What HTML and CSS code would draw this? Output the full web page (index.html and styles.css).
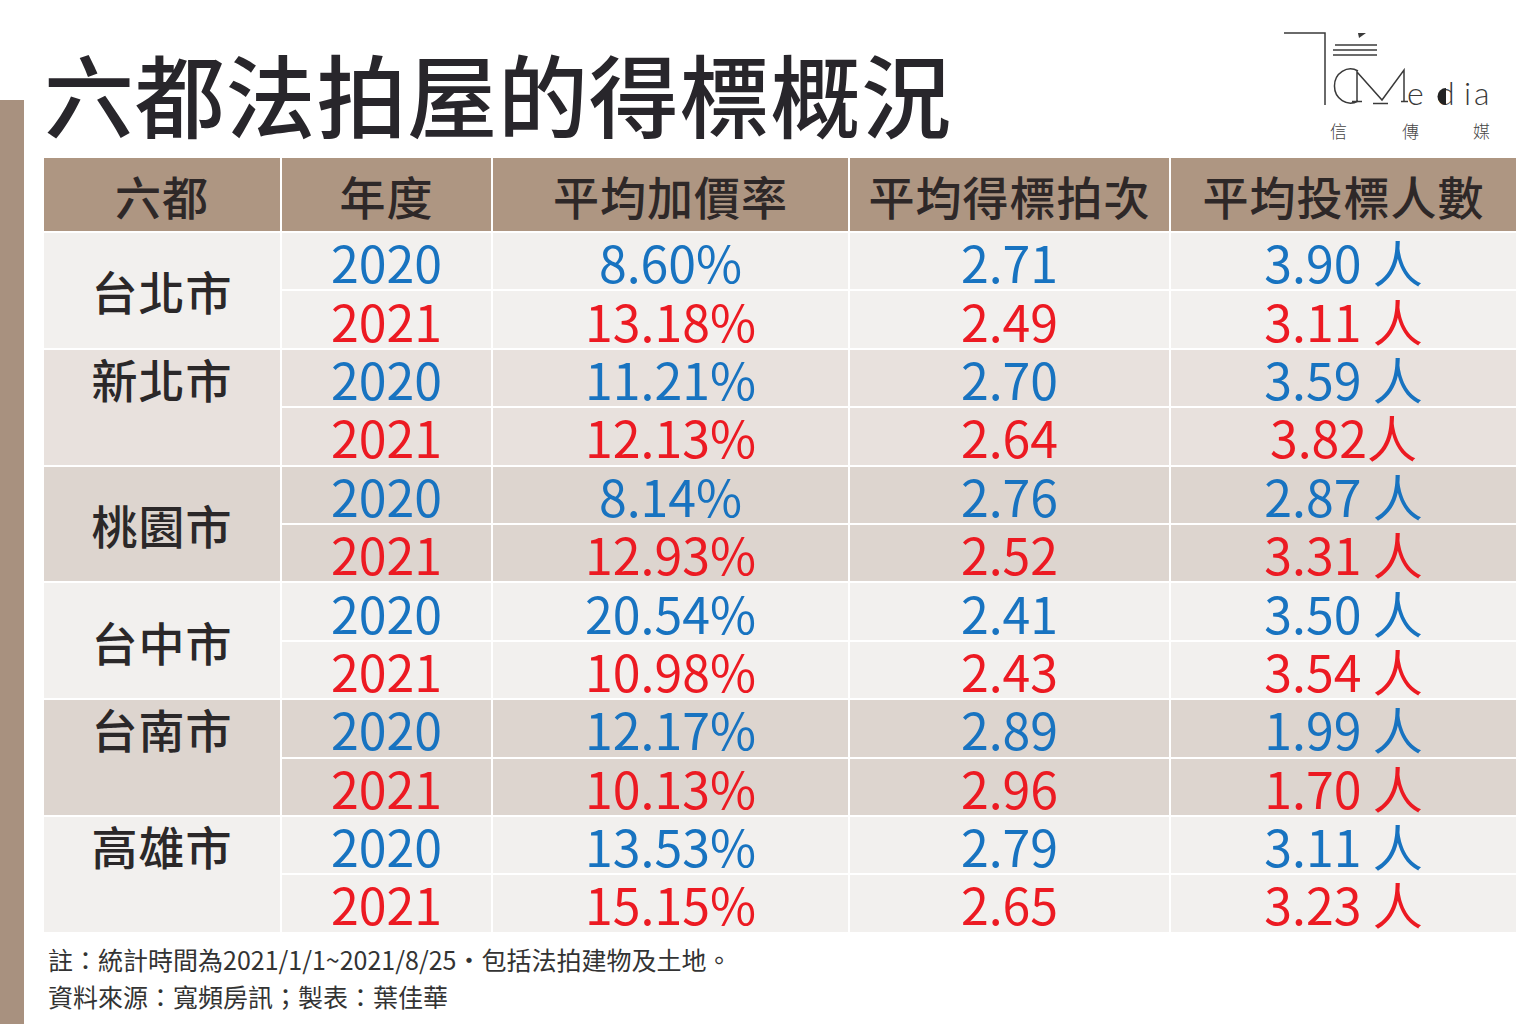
FILE: index.html
```html
<!DOCTYPE html>
<html lang="zh-Hant">
<head>
<meta charset="utf-8">
<title>六都法拍屋的得標概況</title>
<link rel="stylesheet" href="styles.css">
</head>
<body>
<div class="page">
  <div class="sidebar"></div>
  <main class="main">
    <header class="top">
      <h1 class="title">六都法拍屋的得標概況</h1>
      <svg class="logo" width="215" height="120" viewBox="0 0 215 120">
        <g fill="none" stroke="#3a3a3a" stroke-width="1.5">
          <polyline points="4,8 45,8 45,80"/>
          <line x1="55" y1="20" x2="97" y2="20"/>
          <line x1="53" y1="25" x2="97" y2="25"/>
          <line x1="53" y1="30" x2="97" y2="30"/>
          <path d="M78 46 A16 17 0 1 0 78 76"/>
          <path d="M77 76 V47 L102 75 L124 45 V76"/>
          <line x1="72" y1="76.5" x2="82" y2="76.5"/>
          <line x1="93" y1="78.5" x2="108" y2="78.5"/>
          <line x1="121" y1="76.5" x2="128" y2="76.5"/>
        </g>
        <polygon points="78,8 86,8 79,13" fill="#3a3a3a"/>
        <g class="logo-latin" fill="#3a3a3a">
          <text x="127" y="80">e</text>
          <text x="157" y="80">d</text>
          <text x="184" y="80">i</text>
          <text x="194" y="80">a</text>
        </g>
        <path d="M166 63 A8.5 8.5 0 0 0 166 80 Z" fill="#222"/>
        <g class="logo-cjk" fill="#444">
          <text x="50" y="113">信</text>
          <text x="122" y="113">傳</text>
          <text x="193" y="113">媒</text>
        </g>
      </svg>
    </header>

    <div class="table">
      <div class="th">六都</div>
      <div class="th">年度</div>
      <div class="th">平均加價率</div>
      <div class="th">平均得標拍次</div>
      <div class="th">平均投標人數</div>

      <div class="city g-light">台北市</div>
      <div class="cell g-light blue">2020</div>
      <div class="cell g-light blue">8.60%</div>
      <div class="cell g-light blue">2.71</div>
      <div class="cell g-light blue">3.90 人</div>
      <div class="cell g-light red">2021</div>
      <div class="cell g-light red">13.18%</div>
      <div class="cell g-light red">2.49</div>
      <div class="cell g-light red">3.11 人</div>

      <div class="city city-top g-mid">新北市</div>
      <div class="cell g-mid blue">2020</div>
      <div class="cell g-mid blue">11.21%</div>
      <div class="cell g-mid blue">2.70</div>
      <div class="cell g-mid blue">3.59 人</div>
      <div class="cell g-mid red">2021</div>
      <div class="cell g-mid red">12.13%</div>
      <div class="cell g-mid red">2.64</div>
      <div class="cell g-mid red">3.82人</div>

      <div class="city g-dark">桃園市</div>
      <div class="cell g-dark blue">2020</div>
      <div class="cell g-dark blue">8.14%</div>
      <div class="cell g-dark blue">2.76</div>
      <div class="cell g-dark blue">2.87 人</div>
      <div class="cell g-dark red">2021</div>
      <div class="cell g-dark red">12.93%</div>
      <div class="cell g-dark red">2.52</div>
      <div class="cell g-dark red">3.31 人</div>

      <div class="city g-light">台中市</div>
      <div class="cell g-light blue">2020</div>
      <div class="cell g-light blue">20.54%</div>
      <div class="cell g-light blue">2.41</div>
      <div class="cell g-light blue">3.50 人</div>
      <div class="cell g-light red">2021</div>
      <div class="cell g-light red">10.98%</div>
      <div class="cell g-light red">2.43</div>
      <div class="cell g-light red">3.54 人</div>

      <div class="city city-top g-dark">台南市</div>
      <div class="cell g-dark blue">2020</div>
      <div class="cell g-dark blue">12.17%</div>
      <div class="cell g-dark blue">2.89</div>
      <div class="cell g-dark blue">1.99 人</div>
      <div class="cell g-dark red">2021</div>
      <div class="cell g-dark red">10.13%</div>
      <div class="cell g-dark red">2.96</div>
      <div class="cell g-dark red">1.70 人</div>

      <div class="city city-top g-light">高雄市</div>
      <div class="cell g-light blue">2020</div>
      <div class="cell g-light blue">13.53%</div>
      <div class="cell g-light blue">2.79</div>
      <div class="cell g-light blue">3.11 人</div>
      <div class="cell g-light red">2021</div>
      <div class="cell g-light red">15.15%</div>
      <div class="cell g-light red">2.65</div>
      <div class="cell g-light red">3.23 人</div>
    </div>

    <footer class="notes">
      <p>註：統計時間為2021/1/1~2021/8/25・包括法拍建物及土地。</p>
      <p>資料來源：寬頻房訊；製表：葉佳華</p>
    </footer>
  </main>
</div>
</body>
</html>
```

FILE: styles.css
```css
html, body {
  margin: 0;
  padding: 0;
  background: #ffffff;
}

body {
  width: 1536px;
  height: 1024px;
  overflow: hidden;
  font-family: "Noto Sans CJK TC", "Noto Sans", sans-serif;
  color: #2b2829;
}

.page {
  display: flex;
  height: 1024px;
}

.sidebar {
  width: 24px;
  flex: 0 0 24px;
  margin-top: 100px;
  background: #a8917f;
}

.main {
  margin-left: 20px;
  width: 1472px;
  display: flex;
  flex-direction: column;
}

.top {
  display: flex;
  justify-content: space-between;
  align-items: flex-start;
  height: 158px;
}

.title {
  margin: 0;
  padding-top: 47px;
  font-size: 90px;
  line-height: 90px;
  font-weight: 500;
  color: #28262b;
  letter-spacing: 0.8px;
}

.logo {
  margin-top: 25px;
  margin-right: 21px;
}

.logo-latin {
  font-family: "Lato", "DejaVu Sans", sans-serif;
  font-weight: 300;
  font-size: 32px;
}

.logo-cjk {
  font-family: "Noto Sans CJK TC", sans-serif;
  font-weight: 300;
  font-size: 17px;
}

.table {
  display: grid;
  grid-template-columns: 236px 209px 355px 319px 345px;
  grid-template-rows: 73px repeat(12, 56.4px);
  gap: 2px;
  background: #ffffff;
}

.th {
  background: #ae9682;
  display: flex;
  align-items: center;
  justify-content: center;
  font-size: 46px;
  line-height: 60px;
  font-weight: 500;
  color: #2e2828;
  letter-spacing: 1px;
}

.city {
  grid-row: span 2;
  display: flex;
  align-items: center;
  justify-content: center;
  font-size: 46px;
  line-height: 54px;
  font-weight: 500;
  color: #2b2829;
  letter-spacing: 1px;
}

.city-top {
  align-items: flex-start;
  padding-top: 1px;
}

.cell {
  display: flex;
  align-items: center;
  justify-content: center;
  font-size: 50px;
  line-height: 52px;
  font-weight: 400;
}

.g-light { background: #f2f0ee; }
.g-mid { background: #e8e1dd; }
.g-dark { background: #ddd5cf; }

.blue { color: #1873c0; }
.red { color: #ec1a22; }

.notes {
  margin-top: 9px;
  padding-left: 4px;
}

.notes p {
  margin: 0;
  font-size: 25px;
  line-height: 37px;
  font-weight: 400;
  color: #333333;
}
```
